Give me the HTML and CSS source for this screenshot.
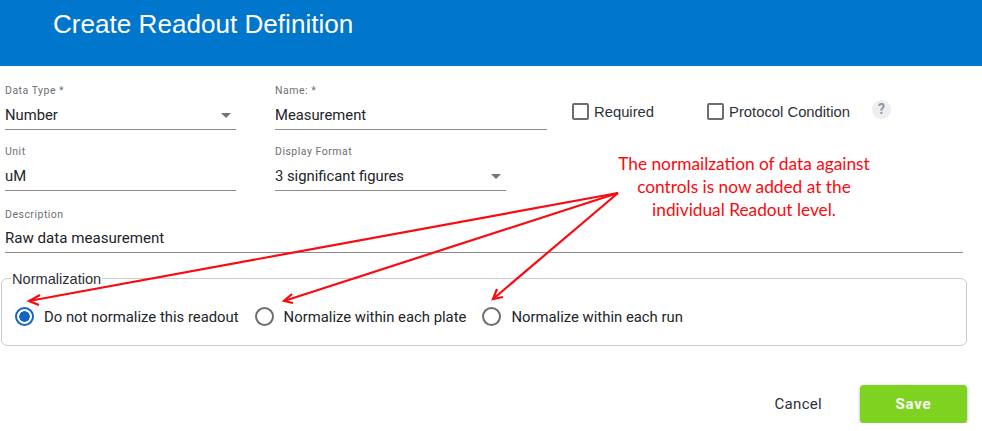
FILE: index.html
```html
<!DOCTYPE html>
<html lang="en">
<head>
    <meta charset="UTF-8">
    <meta name="viewport" content="width=device-width, initial-scale=1.0">
    <title>Create Readout Definition</title>
    <link rel="stylesheet" href="styles.css">
</head>
<body>
    <header class="dialog-header">
        <h1>Create Readout Definition</h1>
    </header>

    <form class="readout-form">
        <div class="form-row">
            <div class="field field-select">
                <label>Data Type *</label>
                <div class="field-value">Number<span class="caret"></span></div>
            </div>
            <div class="field field-name">
                <label>Name: *</label>
                <div class="field-value">Measurement</div>
            </div>
            <div class="checks">
                <div class="check check-required"><span class="box"></span>Required</div>
                <div class="check"><span class="box"></span>Protocol Condition</div>
                <span class="help">?</span>
            </div>
        </div>
        <div class="form-row">
            <div class="field field-select">
                <label>Unit</label>
                <div class="field-value">uM</div>
            </div>
            <div class="field field-select">
                <label>Display Format</label>
                <div class="field-value">3 significant figures<span class="caret"></span></div>
            </div>
        </div>
        <div class="field field-wide">
            <label>Description</label>
            <div class="field-value">Raw data measurement</div>
        </div>

        <fieldset class="norm-box">
            <legend>Normalization</legend>
            <div class="radio radio-on"><span class="dot"></span>Do not normalize this readout</div>
            <div class="radio"><span class="dot"></span>Normalize within each plate</div>
            <div class="radio"><span class="dot"></span>Normalize within each run</div>
        </fieldset>

        <div class="form-actions">
            <button type="button" class="btn btn-cancel">Cancel</button>
            <button type="button" class="btn btn-save">Save</button>
        </div>
    </form>

    <!-- annotation drawn over the form -->
    <p class="note">The normailzation of data against<br>controls is now added at the<br>individual Readout level.</p>
    <svg class="arrows" width="982" height="431" viewBox="0 0 982 431" fill="none" stroke="#fa0a10" stroke-width="2.2">
        <path d="M618 193L29 301"/>
        <path d="M40 295L29 301L39 305"/>
        <path d="M618 193L284 301"/>
        <path d="M292 294L284 301L293 303"/>
        <path d="M618 193L493 299"/>
        <path d="M497 289L493 299L503 297"/>
    </svg>
</body>
</html>
```

FILE: styles.css
```css
body {
    font-family: Roboto, Arial, sans-serif;
    margin: 0;
    padding: 0;
    background-color: #ffffff;
    color: #212529;
    font-size: 15px;
    overflow: hidden;
}
.dialog-header {
    background-color: #0076cc;
    height: 66px;
    padding-left: 53px;
}
.dialog-header h1 {
    margin: 0;
    padding-top: 9px;
    color: #ffffff;
    font-family: 'Liberation Sans', Arial, sans-serif;
    font-size: 26.1px;
    line-height: 30px;
    font-weight: 400;
}
.readout-form {
    padding: 18px 15px 0 1px;
}
.form-row {
    display: flex;
    gap: 39px;
    margin-bottom: 15px;
    padding-left: 4px;
}
.form-row + .form-row {
    margin-bottom: 17px;
}
.field {
    height: 45px;
    border-bottom: 1px solid #8c8c8c;
}
.field label {
    display: block;
    font-size: 10.5px;
    line-height: 14px;
    letter-spacing: 0.5px;
    color: #6c6f75;
}
.field-value {
    display: flex;
    justify-content: space-between;
    align-items: center;
    font-size: 14.8px;
    line-height: 22px;
    margin-top: 6px;
}
.field-select {
    width: 231px;
}
.field-name {
    width: 272px;
}
.field-wide {
    height: 44px;
    margin-left: 4px;
    width: 958px;
}
.field-wide .field-value {
    margin-top: 5px;
    font-size: 15.1px;
}
.caret {
    width: 0;
    height: 0;
    margin-right: 5px;
    border-left: 5px solid transparent;
    border-right: 5px solid transparent;
    border-top: 5px solid #757575;
}
.checks {
    display: flex;
    align-items: flex-start;
    margin-left: -14px;
    padding-top: 19px;
}
.check {
    display: flex;
    align-items: center;
    font-family: 'Liberation Sans', Arial, sans-serif;
    font-size: 14.8px;
    line-height: 16px;
    color: #2c3138;
}
.check-required {
    margin-right: 53px;
}
.box {
    width: 13px;
    height: 13px;
    margin-right: 5px;
    border: 2px solid #6d6d6d;
    border-radius: 2px;
}
.help {
    width: 19px;
    height: 19px;
    margin: -3px 0 0 22px;
    border-radius: 50%;
    background-color: #eceef1;
    color: #8f96a3;
    font-size: 14px;
    font-weight: 700;
    line-height: 19px;
    text-align: center;
}
.norm-box {
    display: flex;
    align-items: center;
    height: 75px;
    margin: 16px 0 0;
    padding: 0;
    border: 1px solid #cccccc;
    border-radius: 6px;
}
.norm-box legend {
    margin-left: 9px;
    padding: 1px 1px 0;
    font-family: 'Liberation Sans', Arial, sans-serif;
    font-size: 14.6px;
    line-height: 18px;
    color: #2c3138;
}
.radio {
    display: flex;
    align-items: center;
    margin-right: 16px;
    font-size: 14.85px;
    line-height: 20px;
}
.radio-on {
    margin-left: 13px;
}
.dot {
    box-sizing: border-box;
    width: 19px;
    height: 19px;
    margin-right: 10px;
    border: 2px solid #6d6d6d;
    border-radius: 50%;
}
.radio-on .dot {
    border-color: #1565c0;
    background: radial-gradient(circle, #1565c0 0 5px, #ffffff 5.5px);
}
.form-actions {
    display: flex;
    justify-content: flex-end;
    align-items: center;
    margin-top: 39px;
}
.btn {
    border: none;
    background: none;
    cursor: pointer;
    font-family: Roboto, Arial, sans-serif;
    font-size: 15px;
}
.btn-cancel {
    margin-right: 38px;
    padding: 0;
    letter-spacing: 0.3px;
    color: #2c3138;
}
.btn-save {
    width: 107px;
    height: 38px;
    border-radius: 4px;
    background-color: #7ed321;
    color: #ffffff;
    font-weight: 700;
    letter-spacing: 0.8px;
    box-shadow: 0 1px 3px rgba(0, 0, 0, 0.35);
}
.note {
    position: absolute;
    top: 152px;
    left: 594px;
    width: 300px;
    margin: 0;
    color: #fa0a10;
    font-family: Lato, 'Open Sans', sans-serif;
    font-size: 17.3px;
    line-height: 23px;
    text-align: center;
}
.arrows {
    position: absolute;
    top: 0;
    left: 0;
    pointer-events: none;
}
```
